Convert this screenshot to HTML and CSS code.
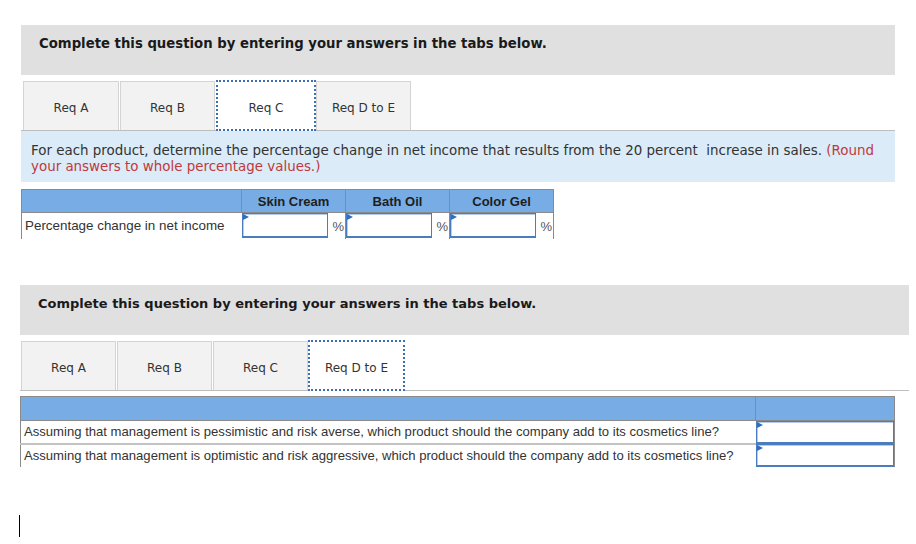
FILE: index.html
```html
<!DOCTYPE html>
<html>
<head>
<meta charset="utf-8">
<link rel="stylesheet" href="styles.css">
</head>
<body>
<section class="q q1">
  <div class="banner">Complete this question by entering your answers in the tabs below.</div>
  <div class="tabs">
    <div class="tab">Req A</div>
    <div class="tab">Req B</div>
    <div class="tab active">Req C</div>
    <div class="tab">Req D to E</div>
  </div>
  <div class="instr"><span class="line">For each product, determine the percentage change in net income that results from the 20 percent&nbsp; increase in sales. <span class="red">(Round</span></span><span class="line red">your answers to whole percentage values.)</span></div>
  <table class="t1">
    <colgroup><col class="c-lbl"><col class="c-in"><col class="c-pct"><col class="c-in"><col class="c-pct"><col class="c-in"><col class="c-pct"></colgroup>
    <tr class="hd"><th></th><th colspan="2">Skin Cream</th><th colspan="2">Bath Oil</th><th colspan="2">Color Gel</th></tr>
    <tr class="row">
      <td class="lbl">Percentage change in net income</td>
      <td class="in"><div class="box"></div></td><td class="pct">%</td>
      <td class="in"><div class="box"></div></td><td class="pct">%</td>
      <td class="in"><div class="box"></div></td><td class="pct">%</td>
    </tr>
  </table>
</section>

<section class="q q2">
  <div class="banner">Complete this question by entering your answers in the tabs below.</div>
  <div class="tabs">
    <div class="tab">Req A</div>
    <div class="tab">Req B</div>
    <div class="tab">Req C</div>
    <div class="tab active">Req D to E</div>
  </div>
  <table class="t2">
    <colgroup><col class="c-q"><col class="c-a"></colgroup>
    <tr class="hd"><th></th><th></th></tr>
    <tr class="row"><td class="lbl">Assuming that management is pessimistic and risk averse, which product should the company add to its cosmetics line?</td><td class="in"><div class="box"></div></td></tr>
    <tr class="row"><td class="lbl">Assuming that management is optimistic and risk aggressive, which product should the company add to its cosmetics line?</td><td class="in"><div class="box"></div></td></tr>
  </table>
</section>
<div class="caret"></div>
</body>
</html>
```

FILE: styles.css
```css
html, body { margin: 0; padding: 0; background: #fff; }
body { width: 916px; height: 544px; overflow: hidden; font-family: "DejaVu Sans", Verdana, sans-serif; color: #222; }

.q1 { margin: 25px 0 0 21px; width: 874px; }
.q2 { margin: 46px 0 0 20px; width: 889px; }

.banner {
  background: #e0e0e0;
  height: 50px;
  box-sizing: border-box;
  padding: 11px 0 0 18px;
  font-weight: bold;
  font-size: 13px;
  line-height: 16px;
  color: #1a1a1a;
}
.q1 .banner { font-size: 13.25px; }

.tabs {
  display: flex;
  align-items: flex-end;
  gap: 1px;
  height: 51px;
  padding-left: 2px;
  border-bottom: 1px solid #bdbdbd;
  box-sizing: border-box;
  margin-top: 5px;
}
.q2 .tabs { padding-left: 1px; }
.tab {
  width: 95px;
  height: 49px;
  box-sizing: border-box;
  background: #f2f2f2;
  border: 1px solid #d4d4d4;
  border-bottom: none;
  display: flex;
  align-items: center;
  justify-content: center;
  font-size: 12px;
  color: #333;
  padding-top: 4px;
}
.q1 .tab:first-child { width: 96px; }
.tab.active {
  background: #fff;
  height: 51px;
  border: 2px dotted #3d6fb6;
  margin-bottom: -1px;
  padding-top: 5px;
}
.q1 .tab.active { width: 100px; }
.q1 .tab.active + .tab { margin-left: -1px; }
.q2 .tab.active { width: 97px; margin-left: -1px; }

.instr {
  background: #dbebf8;
  height: 51px;
  box-sizing: border-box;
  padding: 12px 10px 0 10px;
  font-size: 13.42px;
  line-height: 15.5px;
  color: #333;
}
.instr .line { display: block; white-space: nowrap; }
.red { color: #c0393b; }

table { border-collapse: collapse; font-family: "Liberation Sans", Arial, sans-serif; font-size: 13px; }
.t1 { margin-top: 7px; width: 532px; table-layout: fixed; }
.c-lbl { width: 220px; }
.c-in { width: 86px; }
.c-pct { width: 18px; }

.hd th {
  background: #78ace4;
  border: 1px solid #8a8a8a;
  height: 23px;
  padding: 0;
  font-weight: bold;
  color: #1e1e1e;
  font-size: 13px;
  box-sizing: border-box;
}
.row td { padding: 0; height: 26px; box-sizing: border-box; }
.t1 .lbl { border-left: 1px solid #8a8a8a; padding-left: 3px; color: #333; font-size: 13.4px; }
.pct { border-right: 1px solid #8a8a8a; color: #555; text-align: left; padding: 2px 0 0 5px !important; }
.in { vertical-align: top; }
.box {
  position: relative;
  height: 25px;
  box-sizing: border-box;
  border: 1px solid #4a7cc0;
  border-bottom-width: 2px;
  box-shadow: inset 1px 1px 0 #b5cdea;
  background: #fff;
}
.box::before {
  content: "";
  position: absolute;
  left: 0; top: 0;
  border-left: 6px solid #2f6cc2;
  border-top: 3px solid transparent;
  border-bottom: 3px solid transparent;
}

.t2 { margin-top: 5px; width: 874px; table-layout: fixed; }
.c-q { width: 735px; }
.c-a { width: 139px; }
.t2 .hd th { height: 24px; }
.t2 .row td { height: 23px; }
.t2 .lbl { border-left: 1px solid #8a8a8a; border-bottom: 2px solid #c2c2c2; padding-left: 3px; color: #333; white-space: nowrap; font-size: 13.1px; }
.t2 .row:last-child .lbl { border-bottom: none; }
.t2 .in { border-right: 1px solid #8a8a8a; }
.t2 .box { height: 23px; }

.caret { width: 1px; height: 22px; background: #000; margin: 48px 0 0 19px; }
```
